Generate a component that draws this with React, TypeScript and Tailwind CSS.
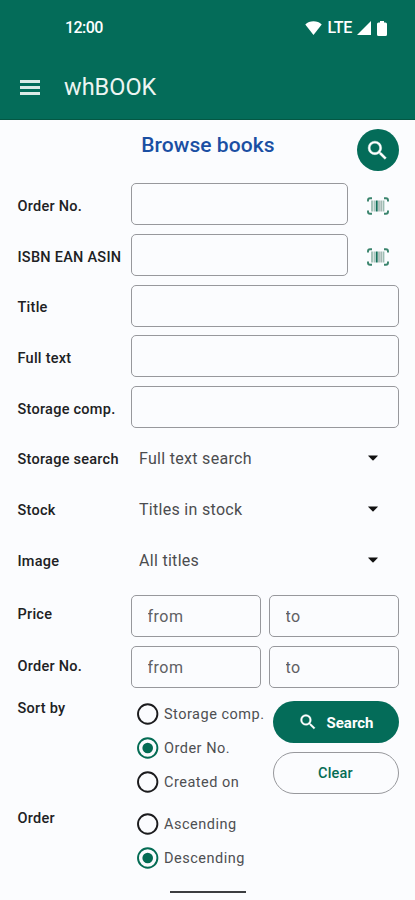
import type { ReactNode } from "react";

const SEARCH_PATH =
  "M15.5 14h-.79l-.28-.27A6.47 6.47 0 0 0 16 9.5 6.5 6.5 0 1 0 9.5 16c1.61 0 3.09-.59 4.23-1.57l.27.28v.79l5 4.99L20.49 19l-4.99-5zm-6 0C7.01 14 5 11.99 5 9.5S7.01 5 9.5 5 14 7.01 14 9.5 11.99 14 9.5 14z";

function SearchIcon({ className }: { className: string }) {
  return (
    <svg viewBox="0 0 24 24" className={className} fill="currentColor" stroke="currentColor" strokeWidth="0.4">
      <path d={SEARCH_PATH} />
    </svg>
  );
}

function BarcodeIcon() {
  return (
    <svg viewBox="0 0 24 20" className="h-5 w-6" fill="none">
      <path
        d="M2 5.500V4.200q0-2 2-2h2M18 2.200h2q2 0 2 2v1.300M22 14.500v1.300q0 2-2 2h-2M6 17.800H4q-2 0-2-2v-1.300"
        stroke="#3a846d"
        strokeWidth="1.900"
      />
      <path d="M6 4.500v11M17.500 4.500v11" stroke="#9dbdb3" strokeWidth="1.800" />
      <path d="M8.300 4.500v11" stroke="#a9c6bd" strokeWidth="1.500" />
      <path d="M10.700 4.500v11" stroke="#15705a" strokeWidth="2" />
      <path d="M13 4.500v11M15.200 4.500v11" stroke="#a5b8b3" strokeWidth="1.700" />
    </svg>
  );
}

function StatusBar() {
  return (
    <div className="flex h-14 items-center justify-between pl-[65px] pr-[28px] text-white">
      <span className="text-[16px] font-medium leading-none tracking-[-0.55px]">12:00</span>
      <div className="flex items-center">
        <svg viewBox="0 0 17 14" className="h-[14px] w-[17px]" fill="currentColor">
          <path d="M8.500 14 .3 3.500C2.500 1.300 5.300.3 8.500.3s6 1 8.200 3.200z" />
        </svg>
        <span className="ml-[5px] text-[16px] font-medium leading-none tracking-[-0.3px]">LTE</span>
        <svg viewBox="0 0 14 14" className="ml-[5px] h-[14px] w-[14px]" fill="currentColor">
          <path d="M14 0v14H0z" />
        </svg>
        <svg viewBox="0 0 10 15" className="ml-[6px] h-[15px] w-[10px]" fill="currentColor">
          <path d="M3 0h4v1.500h1.500q1.500 0 1.500 1.500v10.500q0 1.500-1.500 1.500h-7Q0 15 0 13.500V3q0-1.500 1.500-1.500H3z" />
        </svg>
      </div>
    </div>
  );
}

function Row({ label, children }: { label: string; children: ReactNode }) {
  return (
    <div className="flex h-[50.700px] items-center">
      <div className="w-[113px] shrink-0 whitespace-nowrap pt-[5px] text-[14.500px] font-medium leading-5 tracking-[0.26px] text-[#202123]">
        {label}
      </div>
      {children}
    </div>
  );
}

const BOX = "h-[42px] min-w-0 rounded-[5px] border border-[#97989c] bg-transparent outline-none";

function ScanField({ label }: { label: string }) {
  return (
    <Row label={label}>
      <input aria-label={label} className={`${BOX} w-[217px]`} />
      <button aria-label="Scan barcode" className="ml-[18px] pt-[3px]">
        <BarcodeIcon />
      </button>
    </Row>
  );
}

function TextField({ label }: { label: string }) {
  return (
    <Row label={label}>
      <input aria-label={label} className={`${BOX} flex-1`} />
    </Row>
  );
}

function SelectField({ label, value }: { label: string; value: string }) {
  return (
    <Row label={label}>
      <button className="flex h-[42px] flex-1 items-center justify-between pl-[8.500px] pr-[21px] pt-[3px] text-left text-[16px] tracking-[0.3px] text-[#4b4c4f]">
        {value}
        <svg viewBox="0 0 10 6" className="mb-[2px] h-[6px] w-[10px]" fill="#111">
          <path d="M.3.5h9.400q.3 0 0 .4L5.500 5.200q-.5.500-1 0L.3.900q-.3-.4 0-.4z" />
        </svg>
      </button>
    </Row>
  );
}

function RangeField({ label }: { label: string }) {
  return (
    <div className="flex h-[51.500px] items-center">
      <div className="w-[113px] shrink-0 pb-[1px] text-[14.500px] font-medium leading-5 tracking-[0.26px] text-[#202123]">
        {label}
      </div>
      <div className="grid flex-1 grid-cols-2 gap-[8px] text-[16px] tracking-[0.5px]">
        <input aria-label={`${label} from`} placeholder="from" className={`${BOX} pl-[16px] pt-px placeholder:text-[#5f6063]`} />
        <input aria-label={`${label} to`} placeholder="to" className={`${BOX} pl-[16px] pt-px placeholder:text-[#5f6063]`} />
      </div>
    </div>
  );
}

function Radio({ label, checked = false }: { label: string; checked?: boolean }) {
  return (
    <div className="flex h-[34px] items-center whitespace-nowrap pl-[6px]">
      <svg viewBox="0 0 22 22" className="h-[22px] w-[22px] shrink-0" fill="none">
        <circle cx="10.700" cy="11" r="9.700" stroke={checked ? "#046c54" : "#1b1b1d"} strokeWidth="1.900" />
        {checked && <circle cx="10.700" cy="11" r="5.300" fill="#046c54" />}
      </svg>
      <span className="ml-[5.500px] pt-[3px] text-[14.500px] leading-5 tracking-[0.5px] text-[#4e4f52]">{label}</span>
    </div>
  );
}

function GroupLabel({ children }: { children: ReactNode }) {
  return (
    <div className="w-[113px] shrink-0 pt-[2px] text-[14.500px] font-medium leading-5 tracking-[0.26px] text-[#202123]">
      {children}
    </div>
  );
}

export default function App() {
  return (
    <div className="flex h-[900px] w-[415px] flex-col overflow-hidden bg-[#fbfcfe] font-['Roboto',sans-serif]">
      <header className="h-[120px] shrink-0 border-b border-[#045743] bg-[#046c59]">
        <StatusBar />
        <div className="flex h-[63px] items-center pl-[20px]">
          <svg viewBox="0 0 20 15" className="h-[15px] w-[20px]" fill="#dcebe6">
            <path d="M0 0h20v3H0zM0 6h20v3H0zM0 12h20v3H0z" />
          </svg>
          <h1 className="ml-[24px] pt-px text-[23.500px] leading-none text-[#edf5f2]">whBOOK</h1>
        </div>
      </header>

      <main className="flex flex-1 flex-col pl-[17.500px] pr-[16.500px]">
        <div className="flex h-[59px] shrink-0 items-start justify-end pt-[9px]">
          <h2 className="mr-[82px] pt-[1.500px] text-[21px] font-medium leading-7 tracking-[0.05px] text-[#1a4fa3]">
            Browse books
          </h2>
          <button aria-label="Search" className="flex h-[42px] w-[42px] items-center justify-center rounded-full bg-[#046c59] text-white">
            <SearchIcon className="h-[25px] w-[25px]" />
          </button>
        </div>

        <ScanField label="Order No." />
        <ScanField label="ISBN EAN ASIN" />
        <TextField label="Title" />
        <TextField label="Full text" />
        <TextField label="Storage comp." />
        <SelectField label="Storage search" value="Full text search" />
        <SelectField label="Stock" value="Titles in stock" />
        <SelectField label="Image" value="All titles" />

        <div className="mt-[5.500px]">
          <RangeField label="Price" />
          <RangeField label="Order No." />
        </div>

        <div className="mt-[3.500px] flex">
          <GroupLabel>Sort by</GroupLabel>
          <div className="w-[142px]">
            <Radio label="Storage comp." />
            <Radio label="Order No." checked />
            <Radio label="Created on" />
          </div>
          <div className="flex flex-1 flex-col gap-[9px] pt-[4px]">
            <button className="flex h-[42px] items-center justify-center gap-[9px] rounded-full bg-[#046c59] text-[15px] font-bold text-white">
              <SearchIcon className="h-[20px] w-[20px]" />
              <span className="pt-[3px]">Search</span>
            </button>
            <button className="h-[42px] rounded-full border border-[#97989c] pt-[3px] text-[14.500px] font-medium tracking-[0.2px] text-[#046c54]">
              Clear
            </button>
          </div>
        </div>

        <div className="mt-[8px] flex">
          <GroupLabel>Order</GroupLabel>
          <div>
            <Radio label="Ascending" />
            <Radio label="Descending" checked />
          </div>
        </div>

        <div className="mb-[7px] ml-[152.500px] mt-auto h-[2px] w-[76px] bg-[#3c3d40]" />
      </main>
    </div>
  );
}
